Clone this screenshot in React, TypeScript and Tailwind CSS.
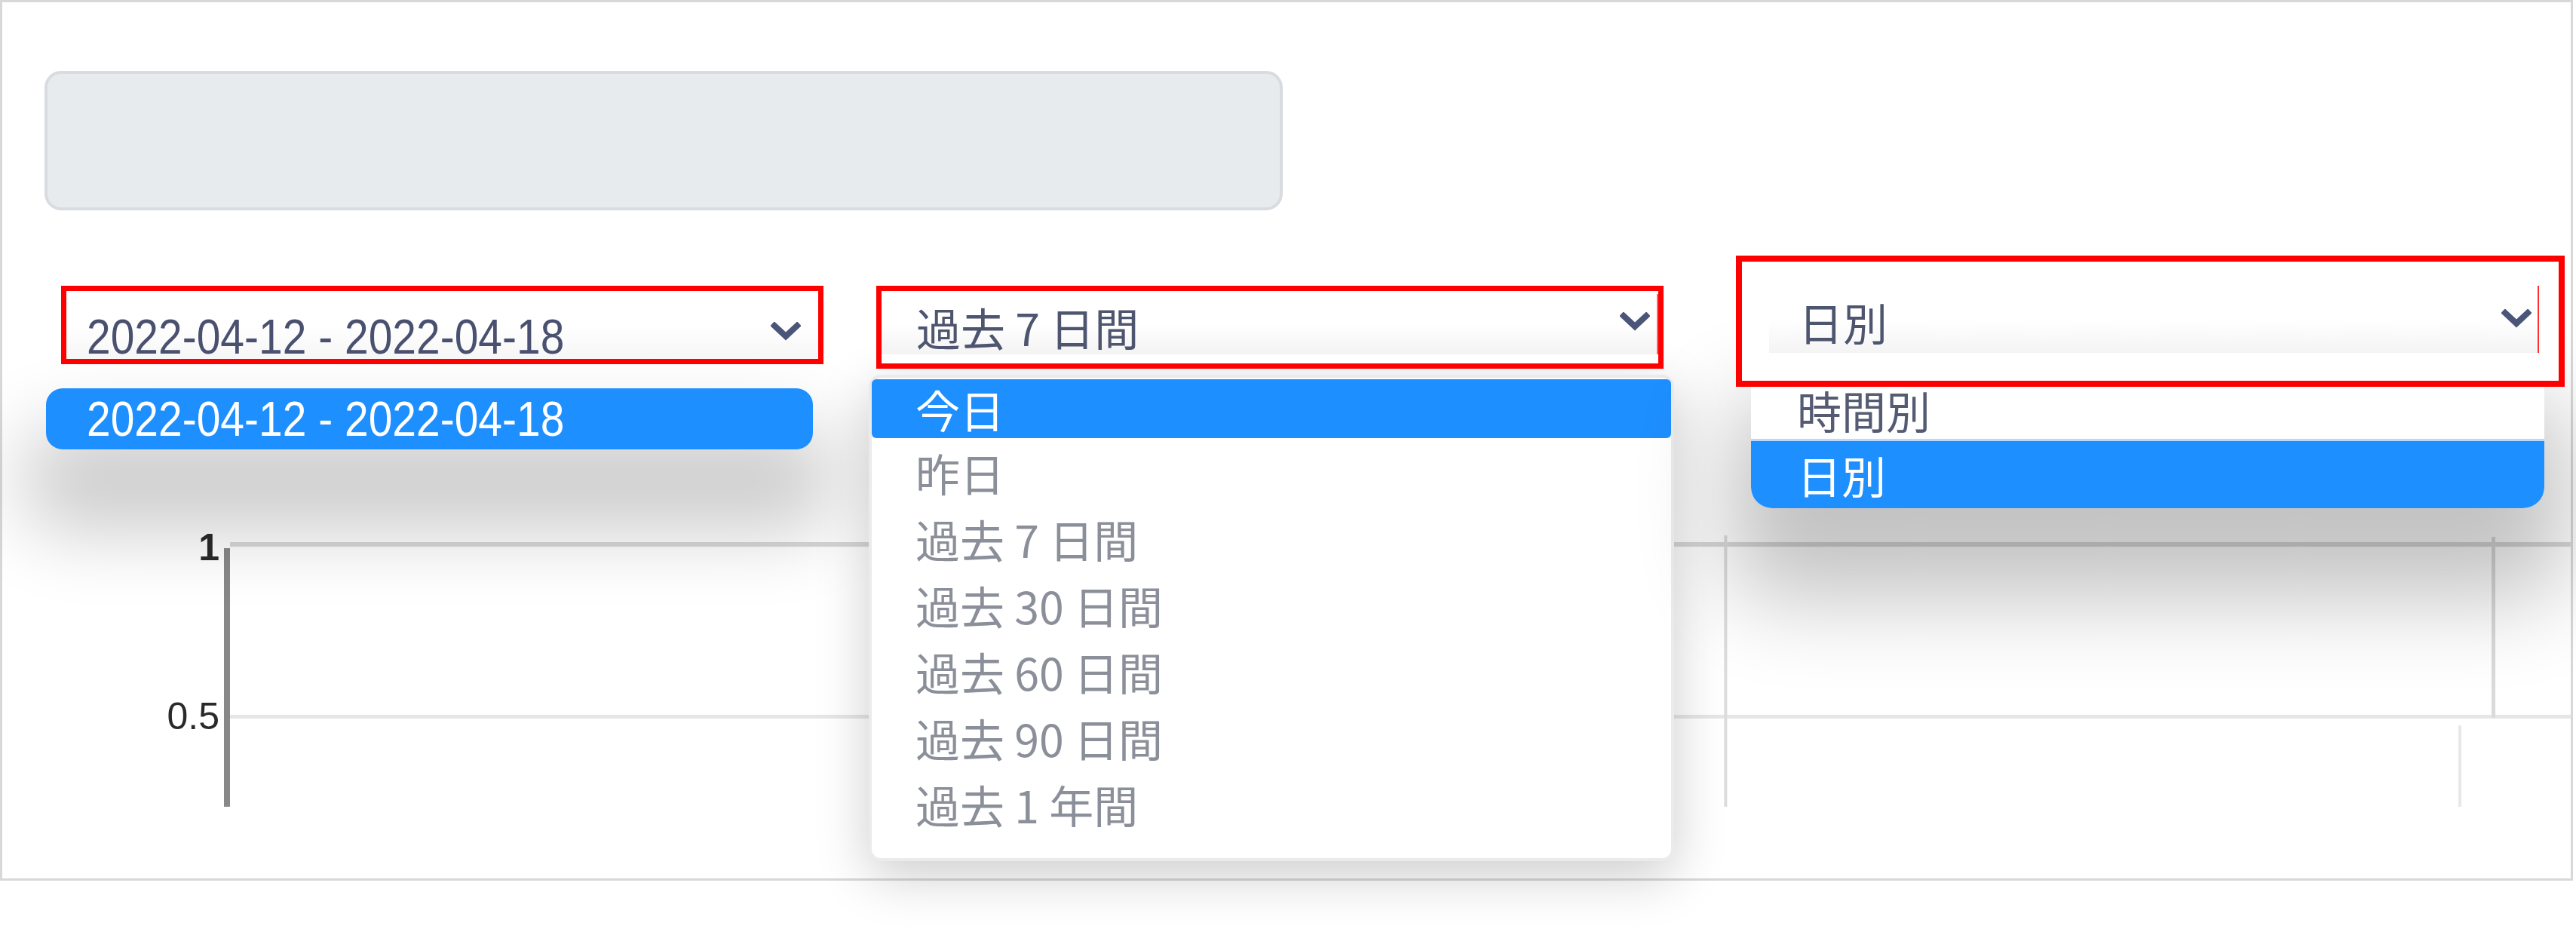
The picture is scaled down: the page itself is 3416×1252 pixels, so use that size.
import React from 'react';

const cjk = "font-['Noto_Sans_CJK_JP','Noto_Sans',sans-serif]";
const latin = "font-['Liberation_Sans','Noto_Sans_CJK_JP',sans-serif]";

const Chevron = ({ className = '' }: { className?: string }) => (
  <svg viewBox="0 0 40 26" className={`w-[40px] h-[26px] ${className}`} fill="none">
    <path d="M5 5 L20 19 L35 5" stroke="#4b5578" strokeWidth="8" strokeLinecap="square" />
  </svg>
);

const periodOptions = ['今日', '昨日', '過去 7 日間', '過去 30 日間', '過去 60 日間', '過去 90 日間', '過去 1 年間'];

const ChartGrid = () => (
  <svg width="3113" height="370" viewBox="0 0 3113 370" className="block">
    <rect x="8" y="19" width="3105" height="6" fill="#d9d9d9" />
    <rect x="8" y="248" width="3105" height="5" fill="#e6e6e6" />
    <rect x="1990" y="10" width="4" height="360" fill="#dcdcdc" />
    <rect x="3008" y="12" width="5" height="240" fill="#dadada" />
    <rect x="2964" y="262" width="4" height="108" fill="#e8e8e8" />
    <rect x="0" y="27" width="8" height="343" fill="#888888" />
  </svg>
);

export default function App() {
  return (
    <div className="w-[3416px] h-[1252px] bg-white overflow-hidden">
      <div className="relative w-[3412px] h-[1168px] border-[3px] border-[#d8d8d8] bg-white">
        {/* gray placeholder box */}
        <div className="ml-[56px] mt-[91px] w-[1642px] h-[185px] rounded-[22px] bg-[#e8ebee] border-[4px] border-[#d8dce0]" />

        {/* select row */}
        <div className="flex items-start mt-[60px]">
          {/* date range select */}
          <div className="relative z-20 ml-[78px] mt-[40px] w-[1011px] h-[104px] border-[7px] border-[#ff0000] bg-white">
            <div className="h-full flex items-center justify-between pl-[27px] pr-[23px] pt-[18px] bg-gradient-to-b from-white via-white to-[#f6f6f6]">
              <span className={`${latin} inline-block mt-[14px] text-[64px] leading-none text-[#4a5170] scale-x-[0.89] origin-left whitespace-nowrap`}>
                2022-04-12 - 2022-04-18
              </span>
              <Chevron />
            </div>
          </div>

          {/* period select */}
          <div className="relative z-20 ml-[70px] mt-[40px] w-[1044px] h-[110px] border-[7px] border-[#ff0000] bg-white">
            <div className="mt-[4px] h-[80px] flex items-center justify-between pl-[46px] pr-[9px] bg-gradient-to-b from-white via-white to-[#f3f3f3] border-r-2 border-[#ff6060]">
              <span className={`${cjk} text-[59px] leading-none text-[#4e556f] mt-[6px]`}>過去 7 日間</span>
              <Chevron className="-mt-[6px]" />
            </div>
          </div>

          {/* granularity select */}
          <div className="relative z-20 ml-[96px] w-[1099px] h-[174px] border-[8px] border-[#ff0000] bg-white">
            <div className="mt-[32px] ml-[36px] mr-[26px] h-[89px] flex items-center justify-between pl-[39px] pr-[8px] bg-gradient-to-b from-white via-white to-[#f4f4f4] border-r-2 border-[#ff3030]">
              <span className={`${cjk} text-[59px] leading-none text-[#4e556f] mt-[6px]`}>日別</span>
              <Chevron className="-mt-[2px]" />
            </div>
          </div>
        </div>

        {/* chart */}
        <div className="flex mt-[187px] h-[370px]">
          <div className={`${latin} w-[294px] shrink-0 flex flex-col items-end pr-[6px] text-[50px] leading-[50px] text-[#2a2a2a]`}>
            <span className="font-bold mt-[1px]">1</span>
            <span className="mt-[174px]">0.5</span>
          </div>
          <ChartGrid />
        </div>

        {/* open option: date range */}
        <div className="absolute z-10 left-[58px] top-[512px] w-[1017px] h-[81px] rounded-[22px] bg-[#1e8fff] flex items-center pl-[54px] shadow-[0_80px_100px_30px_rgba(0,0,0,0.2)]">
          <span className={`${latin} inline-block text-[64px] leading-none text-white scale-x-[0.89] origin-left whitespace-nowrap`}>
            2022-04-12 - 2022-04-18
          </span>
        </div>

        {/* open list: period */}
        <div className="absolute z-10 left-[1149px] top-[494px] w-[1068px] h-[645px] rounded-[16px] bg-white border-[4px] border-[#ebebeb] pt-[2px] shadow-[0_20px_70px_rgba(0,0,0,0.2)]">
          {periodOptions.map((o, i) => (
            <div
              key={o}
              className={`${cjk} flex items-center pl-[58px] text-[59px] leading-none ${
                i === 0 ? 'h-[78px] rounded-[6px] bg-[#1e8fff] text-white' : 'h-[88px] text-[#8b8f99]'
              }`}
            >
              <span className={i === 0 ? '' : 'mt-[2px]'}>{o}</span>
            </div>
          ))}
        </div>

        {/* open list: granularity */}
        <div className="absolute z-10 left-[2319px] top-[470px] w-[1052px] h-[201px] rounded-t-[8px] rounded-b-[28px] bg-white flex flex-col justify-end overflow-hidden shadow-[0_90px_120px_30px_rgba(0,0,0,0.24)]">
          <div className={`${cjk} h-[70px] flex items-center pl-[61px] text-[59px] leading-none text-[#555b72]`}>
            <span className="-mt-[8px]">時間別</span>
          </div>
          <div className={`${cjk} h-[92px] flex items-center pl-[61px] text-[59px] leading-none text-white bg-[#1e8fff] border-t-[3px] border-[#b9daff]`}>
            <span>日別</span>
          </div>
        </div>
      </div>
    </div>
  );
}
